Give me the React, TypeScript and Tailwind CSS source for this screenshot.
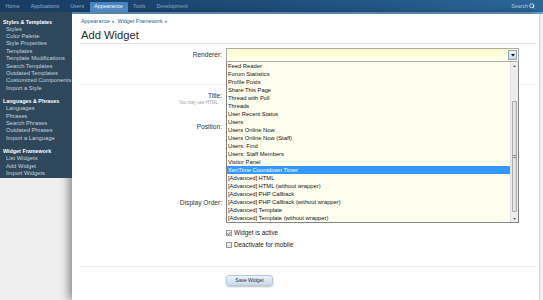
import { Search } from "lucide-react";

// admin sidebar links
const sections = [
  {
    title: "Styles & Templates",
    items: [
      "Styles",
      "Color Palette",
      "Style Properties",
      "Templates",
      "Template Modifications",
      "Search Templates",
      "Outdated Templates",
      "Customized Components",
      "Import a Style",
    ],
  },
  {
    title: "Languages & Phrases",
    items: ["Languages", "Phrases", "Search Phrases", "Outdated Phrases", "Import a Language"],
  },
  {
    title: "Widget Framework",
    items: ["List Widgets", "Add Widget", "Import Widgets"],
  },
];

const renderers = [
  "Feed Reader",
  "Forum Statistics",
  "Profile Posts",
  "Share This Page",
  "Thread with Poll",
  "Threads",
  "User Recent Status",
  "Users",
  "Users Online Now",
  "Users Online Now (Staff)",
  "Users: Find",
  "Users: Staff Members",
  "Visitor Panel",
  "XenTime Countdown Timer",
  "[Advanced] HTML",
  "[Advanced] HTML (without wrapper)",
  "[Advanced] PHP Callback",
  "[Advanced] PHP Callback (without wrapper)",
  "[Advanced] Template",
  "[Advanced] Template (without wrapper)",
];

const tabs = ["Home", "Applications", "Users", "Appearance", "Tools", "Development"];

const Checkbox = ({ checked, label }: { checked?: boolean; label: string }) => (
  <label className="flex items-center h-[8px] gap-[2px]">
    <span className="w-[6px] h-[6px] border border-[#9a9a9a] bg-gradient-to-b from-[#f4f4f4] to-[#dcdcdc] flex items-center justify-center">
      {checked && (
        <svg width="5" height="5" viewBox="0 0 5 5">
          <path d="M0.8 2.6 L2 3.8 L4.3 0.9" fill="none" stroke="#333" strokeWidth="0.9" />
        </svg>
      )}
    </span>
    <span className="text-[6.3px] leading-[8px] text-[#222]">{label}</span>
  </label>
);

export default function App() {
  const selected = "XenTime Countdown Timer";

  return (
    <div className="relative w-[543px] h-[300px] overflow-hidden bg-[#efefef] font-['Liberation_Sans',Arial,sans-serif]">
      {/* top navigation */}
      <nav className="h-[12px] flex bg-gradient-to-r from-[#183c63] via-[#1f4e7b] to-[#2a6899] text-[5.3px] leading-[12px]">
        {tabs.map((t) =>
          t === "Appearance" ? (
            <span
              key={t}
              className="mt-[2px] w-[38px] h-[10px] leading-[8px] text-center text-white rounded-t-[1px] bg-gradient-to-b from-[#3f80bf] to-[#5d9bd6]"
            >
              {t}
            </span>
          ) : (
            <span key={t} className="px-[5.5px] text-[#8fb0cf]">
              {t}
            </span>
          )
        )}
        <span className="ml-auto mr-[8px] flex items-center gap-[1px] text-[#b9d0e6]">
          Search
          <Search size={6} strokeWidth={3} className="text-white" />
        </span>
      </nav>

      <div className="flex">
        {/* sidebar */}
        <aside className="w-[72px] shrink-0 relative z-10">
          <div className="bg-[#2e475a] h-[166px] pl-[3px] pb-[1px]">
            {sections.map((s, i) => (
              <div key={s.title} className={i === 0 ? "pt-[5.5px]" : "pt-[5px]"}>
                <div className="text-[5.4px] leading-[8px] font-bold text-white">{s.title}</div>
                {s.items.map((it) => (
                  <div key={it} className="pl-[3px] text-[5.8px] leading-[7.4px] text-[#c6d3dd] whitespace-nowrap">
                    {it}
                  </div>
                ))}
              </div>
            ))}
          </div>
        </aside>

        <div className="flex-1">
          <div className="h-[2px] bg-[#6fa3d5]" />
          <div className="flex h-[286px]">
            {/* content panel */}
            <main className="w-[467px] bg-white shadow-[-3px_0_9px_rgba(0,0,0,0.45)]">
              <div className="pl-[9px] pt-[4px] text-[5.4px] leading-[6px] text-[#2f5e8e]">
                Appearance »&nbsp; Widget Framework »
              </div>
              <h1 className="pl-[9px] mt-[5px] h-[12px] text-[11.2px] leading-[12px] text-[#2a2a2a]">Add Widget</h1>
              <div className="ml-[8px] mr-[2px] mt-[2px] h-px bg-[#e4e4e4]" />

              {/* renderer row */}
              <div className="mt-[4px] flex gap-[4px] h-[14px]">
                <div className="w-[150px] text-right text-[6.6px] leading-[14px] text-[#333]">Renderer:</div>
                <div className="relative w-[293px] h-[14px] border border-[#ababab] bg-gradient-to-b from-[#ffffc6] to-[#fffff0]">
                  <div className="absolute right-[1px] top-[1px] w-[9px] h-[10px] border border-[#8ea6be] bg-gradient-to-b from-[#eef4fa] to-[#c9d9ea] flex items-center justify-center">
                    <svg width="4" height="3" viewBox="0 0 4 3">
                      <path d="M0 0 H4 L2 2.5 Z" fill="#111" />
                    </svg>
                  </div>

                  {/* open dropdown list */}
                  <div className="absolute -left-px top-[13px] w-[293px] h-[161px] z-20 border-x border-b border-[#858585] bg-[#fffff0] overflow-hidden">
                    <div className="mr-[8px]">
                      {renderers.map((r) => (
                        <div
                          key={r}
                          className={`h-[8px] px-[1px] text-[5.8px] leading-[8px] whitespace-nowrap ${
                            r === selected ? "bg-[#3399ff] text-white" : "text-[#111]"
                          }`}
                        >
                          {r}
                        </div>
                      ))}
                    </div>
                    <div className="absolute right-0 top-0 bottom-0 w-[8px] bg-[#ededed] border-l border-[#dedede] flex flex-col">
                      <div className="h-[7px] flex items-center justify-center">
                        <svg width="3" height="2" viewBox="0 0 3 2">
                          <path d="M0 2 H3 L1.5 0 Z" fill="#666" />
                        </svg>
                      </div>
                      <div className="mt-[32px] h-[111px] mx-px rounded-[1px] border border-[#a8a8a8] bg-gradient-to-r from-[#f2f2f2] to-[#d8d8d8] flex items-center justify-center">
                        <div className="w-[3px] h-[3px] border-y border-[#888]" />
                      </div>
                      <div className="mt-auto h-[7px] flex items-center justify-center">
                        <svg width="3" height="2" viewBox="0 0 3 2">
                          <path d="M0 0 H3 L1.5 2 Z" fill="#666" />
                        </svg>
                      </div>
                    </div>
                  </div>
                </div>
              </div>

              <div className="ml-[8px] mr-[2px] mt-[22px] h-px bg-[#ececec]" />

              {/* rows hidden under the open list */}
              <div className="pt-[7px] w-[150px] text-right">
                <div className="text-[6.6px] leading-[8px] text-[#333]">Title:</div>
                <div className="pr-[4px] text-[4.5px] leading-[5px] text-[#a0a0a0]">You may use HTML</div>
              </div>
              <div className="pt-[18px] w-[150px] text-right text-[6.6px] leading-[8px] text-[#333]">Position:</div>
              <div className="pt-[68px] w-[150px] text-right text-[6.6px] leading-[8px] text-[#333]">Display Order:</div>

              <div className="pt-[22px] pb-[17px] pl-[154px] flex flex-col gap-[4px]">
                <Checkbox checked label="Widget is active" />
                <Checkbox label="Deactivate for mobile" />
              </div>

              <div className="ml-[8px] mr-[2px] border-t border-[#ececec] pt-[8px] pl-[146px]">
                <button className="block w-[47px] h-[11px] rounded-[3px] border border-[#b9cbdb] bg-gradient-to-b from-[#eef4fa] to-[#c6d9ea] shadow-[0_1px_2px_rgba(0,0,0,0.25)] text-[5px] leading-[9px] text-[#1d2b38]">
                  Save Widget
                </button>
              </div>
            </main>
            <div className="flex-1 border-l border-[#d2d2d2] bg-[#efefef]" />
          </div>
        </div>
      </div>
    </div>
  );
}
